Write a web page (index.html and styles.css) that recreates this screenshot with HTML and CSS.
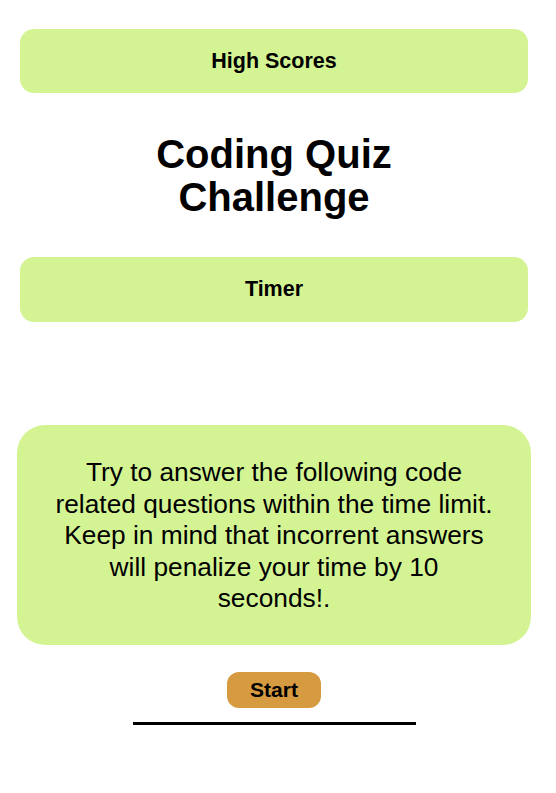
FILE: index.html
```html
<!DOCTYPE html>
<html>
<head>
<meta charset="utf-8">
<link rel="stylesheet" href="styles.css">
</head>
<body>
<div class="page">
  <div class="bar bar-top">High Scores</div>
  <h1 class="title">Coding Quiz<br>Challenge</h1>
  <div class="bar bar-timer">Timer</div>
  <div class="intro">Try to answer the following code related questions within the time limit. Keep in mind that incorrent answers will penalize your time by 10 seconds!.</div>
  <button class="start">Start</button>
  <div class="rule"></div>
</div>
</body>
</html>
```
FILE: styles.css
```css
html, body {
  margin: 0;
  padding: 0;
  background: #ffffff;
}
body {
  font-family: "Liberation Sans", Arial, sans-serif;
  color: #000;
}
.page {
  width: 548px;
  display: flex;
  flex-direction: column;
  align-items: center;
  padding-top: 29px;
}
.bar {
  box-sizing: border-box;
  width: 508px;
  height: 64px;
  background: #d4f494;
  border-radius: 14px;
  display: flex;
  align-items: center;
  justify-content: center;
  font-weight: bold;
  font-size: 21.5px;
}
.bar-timer {
  height: 65px;
  margin-top: 38px;
}
.title {
  margin: 40px 0 0;
  font-size: 40px;
  line-height: 43px;
  font-weight: bold;
  text-align: center;
}
.intro {
  box-sizing: border-box;
  width: 514px;
  margin-top: 103px;
  padding: 32px 36px 30px;
  background: #d4f494;
  border-radius: 28px;
  font-size: 26.3px;
  line-height: 31.5px;
  text-align: center;
}
.start {
  margin-top: 27px;
  height: 36px;
  width: 94px;
  padding: 0;
  border: none;
  border-radius: 12px;
  background: #d69a40;
  font-family: "Liberation Sans", Arial, sans-serif;
  font-weight: bold;
  font-size: 21px;
  color: #000;
}
.rule {
  margin-top: 14px;
  width: 283px;
  height: 3px;
  background: #000;
}
```
